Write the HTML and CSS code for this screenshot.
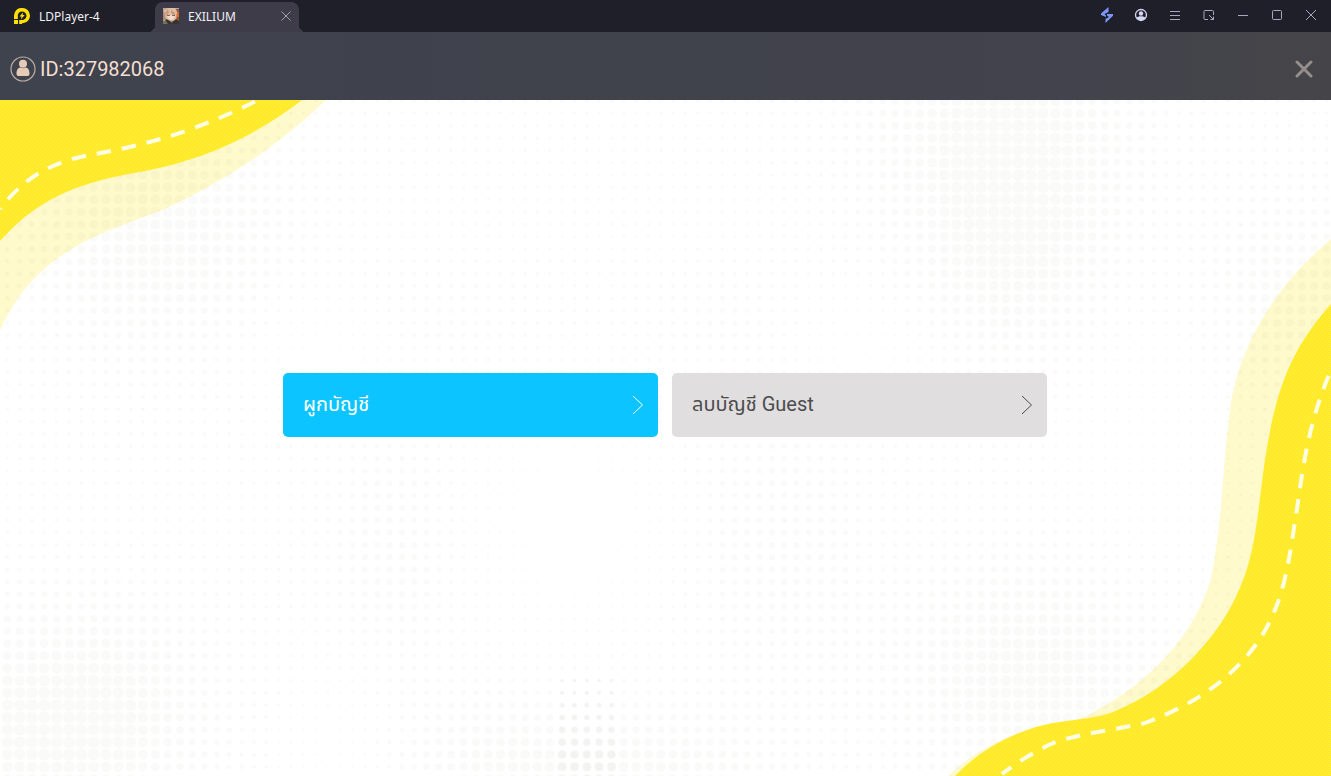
FILE: index.html
```html
<!DOCTYPE html>
<html lang="th">
<head>
<meta charset="utf-8">
<title>LDPlayer-4</title>
<link rel="stylesheet" href="styles.css">
</head>
<body>
<header class="titlebar">
  <div class="brand">
    <svg class="brand-logo" viewBox="0 0 16 16" aria-hidden="true">
      <path fill="#ffe100" fill-rule="evenodd" d="M0 11V7.500A7.500 7.500 0 0 1 8 0a7.700 7.700 0 0 1 8 7.600c0 4.500-3.500 7.600-8 7.600H6.200V12H8c2.600 0 4.500-1.900 4.500-4.300S10.500 3.400 8 3.400 3.800 5.200 3.800 7.500V11z"/>
      <path fill="#ffe100" d="M0 12h4v4H0zM5.200 12H8v4H5.200zM9 4.500 5.500 8.500h2L7 11.200l3.700-4.200H8.600z"/>
    </svg>
    <span>LDPlayer-4</span>
  </div>
  <div class="tab">
    <svg class="tab-art" viewBox="0 0 16 16" aria-hidden="true">
      <path fill="#b9a598" d="M0 0h16v16H0z"/>
      <path fill="#d96c32" d="M12 3h4v10h-3l-1-5z"/>
      <path fill="#8e5a44" d="M13 1h3v3h-2zM14 9h2v3h-2z"/>
      <path fill="#dfbfa4" d="M1 2 5 0h7l2 4-1 7-5 2-6-3z"/>
      <path fill="#f3dccb" d="M4 7h8l-1 4-3 1-3-2z"/>
      <path fill="#c99a7c" d="m2 5 3-4 1 4-3 3zM8 2l4 3v3L8 5z"/>
      <path fill="#8f6460" d="M4 7h3v1H4zM9 7h3v1H9z"/>
      <path fill="#b28a7b" d="M0 4h1l2 7-3 2z"/>
      <path fill="#343330" d="m3 11 4 2h4l2-2 3 2v3H1z"/>
      <path fill="#6f755c" d="M0 13h3l2 3H0z"/>
      <path fill="#b98570" d="M7 13h3l-1 2z"/>
    </svg>
    <span class="tab-name">EXILIUM</span>
    <button class="tab-close" type="button" aria-label="Close tab">
      <svg viewBox="0 0 10 10"><path d="m.5.5 9 9m0-9-9 9"/></svg>
    </button>
  </div>
  <nav class="tools" aria-label="Window">
    <button type="button" aria-label="Boost"><svg viewBox="0 0 16 16"><path fill="#7c96fb" d="M9.500 0 2 6.500V8l5 2V8.500L5.500 7 9.500 5zM6.500 16 14 8.700V7H8v1.500L10 10l-3.500 2z"/></svg></button>
    <button type="button" aria-label="Account"><svg viewBox="0 0 16 16"><circle cx="8" cy="8" r="5.500" stroke="#d5d7f2" stroke-width="1.300" fill="none"/><circle cx="8" cy="6.500" r="2.200" fill="#d5d7f2"/><path fill="#d5d7f2" d="M3.500 11c1-2.300 8-2.300 9 0-1.800 3-7.200 3-9 0z"/></svg></button>
    <button type="button" aria-label="Menu"><svg viewBox="0 0 16 16"><path class="line" d="M3 4.500h10M3 8.500h10M3 12.500h10"/></svg></button>
    <button type="button" aria-label="Mini window"><svg viewBox="0 0 16 16"><path class="line" d="M7 12.500H4q-1 0-1-1v-7q0-1 1-1h7.500q1 0 1 1V8M8 8l4.500 4.500M12.500 9.500v3h-3"/></svg></button>
    <button type="button" aria-label="Minimize"><svg viewBox="0 0 16 16"><path class="line" d="M3 8.500h10"/></svg></button>
    <button type="button" aria-label="Maximize"><svg viewBox="0 0 16 16"><rect class="line" x="3.500" y="3.500" width="9" height="9" rx="1"/></svg></button>
    <button type="button" aria-label="Close"><svg viewBox="0 0 16 16"><path class="line" d="m3 3 10 10m0-10L3 13"/></svg></button>
  </nav>
</header>

<div class="account-bar">
  <svg class="avatar" viewBox="0 0 26 26" aria-hidden="true">
    <circle cx="13" cy="13" r="12" fill="none" stroke="#c0ada0" stroke-width="1.200"/>
    <circle cx="13" cy="7.700" r="4" fill="#e6ccb7"/>
    <path fill="#e6ccb7" d="M6.500 17.500c0-4 2-6 4-6q2.500 1.300 5 0c2 0 4 2 4 6 0 2-1 2.500-2.500 2.500H9c-1.500 0-2.500-.5-2.500-2.500z"/>
  </svg>
  <span class="account-id">ID:327982068</span>
  <button class="dismiss" type="button" aria-label="Close">
    <svg viewBox="0 0 18 18"><path d="m2 2 14 14m0-14L2 16"/></svg>
  </button>
</div>

<main class="stage">
  <svg class="backdrop" viewBox="0 0 1331 676" preserveAspectRatio="none" aria-hidden="true">
    <defs>
      <pattern id="grain" width="4" height="4" patternUnits="userSpaceOnUse">
        <path fill="#ffea29" d="M0 0h4v4H0z"/>
        <path fill="#fff14d" d="M0 0h1v1H0zM2 2h1v1H2z"/>
      </pattern>
    </defs>
    <g fill="#fffacc">
      <path d="M0 0H326C272 52 215 86 160 111C105 132 35 150 0 231Z"/>
      <path d="M1331 139C1285 178 1240 235 1230 310C1222 370 1222 430 1210 482C1190 545 1140 590 1080 619L1030 629C1000 639 972 653 948 676H1331Z"/>
    </g>
    <g id="dots" fill="#46461e" fill-opacity=".026"></g>
    <g fill="url(#grain)">
      <path d="M0 0H302C250 40 200 60 145 71C95 80 45 90 0 141Z"/>
      <path d="M1331 204C1290 250 1277 290 1267 347C1258 400 1258 450 1238 492C1222 530 1178 586 1113 612C1085 622 1062 618 1030 629C1000 639 975 655 955 676H1331Z"/>
    </g>
    <g fill="none" stroke="#fffde3" stroke-width="4" stroke-dasharray="14.500 11">
      <path stroke-dashoffset="13" d="M0 109C28 72 60 60 95 54C150 44 200 30 262 -2"/>
      <path stroke-dashoffset="-6" d="M1331 270C1305 330 1302 380 1294 428C1287 475 1280 515 1251 551C1222 587 1185 608 1145 623C1105 632 1065 635 1043 648C1028 656 1016 663 1002 674"/>
    </g>
  </svg>
  <div class="actions">
    <button class="action action-bind" type="button">
      <span>ผูกบัญชี</span>
      <svg viewBox="0 0 12 20"><path d="m1 1 9.500 9L1 19"/></svg>
    </button>
    <button class="action action-remove" type="button">
      <span>ลบบัญชี Guest</span>
      <svg viewBox="0 0 12 20"><path d="m1 1 9.500 9L1 19"/></svg>
    </button>
  </div>
</main>
<script src="dots.js"></script>
</body>
</html>
```

FILE: styles.css
```css
* { box-sizing: border-box; }
html, body { height: 100%; }
body {
  margin: 0;
  display: flex;
  flex-direction: column;
  overflow: hidden;
  background: #fff;
  font-family: Roboto, "Noto Sans Thai", "Noto Sans", sans-serif;
}
button {
  padding: 0;
  border: 0;
  background: none;
  font: inherit;
  color: inherit;
  cursor: pointer;
}
svg { display: block; }

.titlebar {
  display: flex;
  height: 32px;
  flex: none;
  background: #1f1f29;
  color: #f1f1f6;
  font-family: "Noto Sans", sans-serif;
  font-size: 12px;
}
.brand {
  display: flex;
  align-items: center;
  gap: 9px;
  width: 155px;
  padding-left: 14px;
}
.brand-logo { width: 16px; height: 16px; }
.tab {
  position: relative;
  display: flex;
  align-items: center;
  gap: 9px;
  width: 144px;
  margin-top: 2px;
  padding: 0 8px 2px;
  border-radius: 8px 8px 0 0;
  background: #3d3c48;
}
.tab::before, .tab::after {
  content: "";
  position: absolute;
  bottom: 0;
  width: 7px;
  height: 7px;
}
.tab::before {
  right: 100%;
  background: radial-gradient(circle at 0 0, transparent 7px, #3d3c48 7px);
}
.tab::after {
  left: 100%;
  background: radial-gradient(circle at 100% 0, transparent 7px, #3d3c48 7px);
}
.tab-art { width: 16px; height: 16px; }
.tab-name { flex: 1; }
.tab-close svg {
  width: 10px;
  height: 10px;
  fill: none;
  stroke: #a3a3b0;
}
.tools {
  display: flex;
  align-items: center;
  gap: 18px;
  margin-left: auto;
  padding: 0 12px 2px 0;
}
.tools svg { width: 16px; height: 16px; }
.line { fill: none; stroke: #a8a8bd; }

.account-bar {
  display: flex;
  align-items: center;
  gap: 4px;
  flex: none;
  height: 68px;
  padding: 6px 18px 0 10px;
  background: linear-gradient(90deg, #3f434d, #3f424c 30%, #42434c 80%, #454549);
  color: #f5dfd0;
}
.avatar { width: 26px; height: 26px; }
.account-id { font-size: 20px; line-height: 24px; }
.dismiss { margin-left: auto; }
.dismiss svg {
  width: 18px;
  height: 18px;
  fill: none;
  stroke: #968e8b;
  stroke-width: 3px;
  stroke-linecap: round;
}

.stage {
  position: relative;
  flex: 1;
  min-height: 0;
  display: flex;
  align-items: center;
  justify-content: center;
  padding: 0 17px 66px 16px;
}
.backdrop {
  position: absolute;
  inset: 0;
  width: 100%;
  height: 100%;
}
.actions {
  position: relative;
  display: grid;
  grid-template-columns: 1fr 1fr;
  gap: 14px;
  width: 100%;
  max-width: 764px;
}
.action {
  display: flex;
  align-items: center;
  justify-content: space-between;
  height: 64px;
  padding: 0 14px 0 20px;
  border-radius: 5px;
  font-size: 20px;
  line-height: 28px;
}
.action span { padding-bottom: 2px; }
.action svg {
  width: 12px;
  height: 20px;
  fill: none;
  stroke: currentColor;
}
.action-bind { background: #0cc4ff; color: #fff; }
.action-remove { background: #e0dedf; color: #4c4c4e; }
```

FILE: dots.js
```js
// Halftone backdrop: dot radius grows toward each soft centre [x, y, spreadX, spreadY, strength].
// Negative strengths clear the pattern.
const centres = [
  [155, 125, 85, 85, 0.85],
  [1000, 20, 90, 90, 0.9],
  [1015, 150, 65, 80, 0.75],
  [1290, 190, 60, 70, 0.6],
  [390, 450, 45, 90, 0.35],
  [30, 630, 110, 80, 0.9],
  [110, 600, 60, 65, 0.4],
  [1030, 575, 90, 75, 0.95],
  [490, 665, 60, 45, 0.55],
  [640, 680, 90, 45, 0.8],
  [780, 450, 60, 110, 0.35],
  [450, 215, 60, 35, 0.18],
  [720, 215, 60, 35, 0.18],
  [570, 420, 60, 70, -0.3],
  [320, 250, 50, 45, -0.25],
  [860, 240, 50, 40, -0.25],
  [330, 640, 40, 60, -0.2],
  [1150, 330, 60, 120, -0.15]
];
const pitch = 12.33;
const layer = document.getElementById("dots");

function addDot(x, y, radius, opacity) {
  const dot = document.createElementNS("http://www.w3.org/2000/svg", "circle");
  dot.setAttribute("cx", x.toFixed(1));
  dot.setAttribute("cy", y.toFixed(1));
  dot.setAttribute("r", radius.toFixed(2));
  if (opacity) dot.setAttribute("fill-opacity", opacity);
  layer.append(dot);
}

for (let y = 1; y < 682; y += pitch) {
  for (let x = 7.3; x < 1337; x += pitch) {
    let weight = 0;
    for (const [cx, cy, sx, sy, k] of centres) {
      weight += k * Math.exp(-(((x - cx) / sx) ** 2 + ((y - cy) / sy) ** 2) / 2);
    }
    const radius = Math.min(6, Math.max(0, 1.7 + 4.2 * weight));
    if (radius < 0.4) continue;
    addDot(x, y, radius);
    if (x > 555 && x < 618 && y > 580) addDot(x, y, radius * 0.8, 0.035);
  }
}
```
